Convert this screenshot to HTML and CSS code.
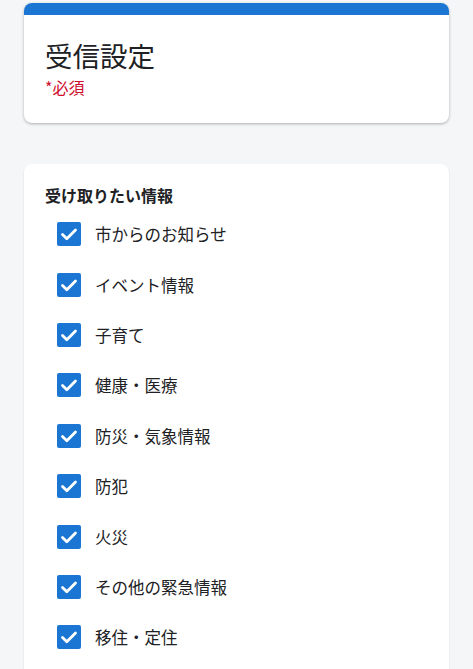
FILE: index.html
```html
<!DOCTYPE html>
<html lang="ja">
<head>
    <meta charset="UTF-8">
    <meta name="viewport" content="width=device-width, initial-scale=1.0">
    <title>受信設定</title>
    <link rel="stylesheet" href="styles.css">
</head>
<body>
    <div class="card header-card">
        <div class="card-bar"></div>
        <div class="header-body">
            <h1>受信設定</h1>
            <div class="required">*必須</div>
        </div>
    </div>

    <div class="card question-card">
        <h2>受け取りたい情報</h2>
        <ul class="options">
            <li><span class="check"><svg viewBox="0 0 24 24"><path d="M5.5 12.5l4.3 4.3 8.7-8.7"/></svg></span>市からのお知らせ</li>
            <li><span class="check"><svg viewBox="0 0 24 24"><path d="M5.5 12.5l4.3 4.3 8.7-8.7"/></svg></span>イベント情報</li>
            <li><span class="check"><svg viewBox="0 0 24 24"><path d="M5.5 12.5l4.3 4.3 8.7-8.7"/></svg></span>子育て</li>
            <li><span class="check"><svg viewBox="0 0 24 24"><path d="M5.5 12.5l4.3 4.3 8.7-8.7"/></svg></span>健康・医療</li>
            <li><span class="check"><svg viewBox="0 0 24 24"><path d="M5.5 12.5l4.3 4.3 8.7-8.7"/></svg></span>防災・気象情報</li>
            <li><span class="check"><svg viewBox="0 0 24 24"><path d="M5.5 12.5l4.3 4.3 8.7-8.7"/></svg></span>防犯</li>
            <li><span class="check"><svg viewBox="0 0 24 24"><path d="M5.5 12.5l4.3 4.3 8.7-8.7"/></svg></span>火災</li>
            <li><span class="check"><svg viewBox="0 0 24 24"><path d="M5.5 12.5l4.3 4.3 8.7-8.7"/></svg></span>その他の緊急情報</li>
            <li><span class="check"><svg viewBox="0 0 24 24"><path d="M5.5 12.5l4.3 4.3 8.7-8.7"/></svg></span>移住・定住</li>
        </ul>
    </div>
</body>
</html>
```

FILE: styles.css
```css
body {
    font-family: "Noto Sans CJK JP", "Noto Sans", sans-serif;
    margin: 0;
    padding: 3px 24px 0;
    background-color: #f5f6f8;
    color: #202124;
}
.card {
    background-color: #fff;
    border-radius: 8px;
    box-shadow: 0 1px 3px rgba(0, 0, 0, 0.3);
    overflow: hidden;
}
.card-bar {
    height: 12px;
    background-color: #1b76d3;
}
.header-body {
    padding: 22px 21px 24px;
}
.header-body h1 {
    margin: 0;
    font-size: 27.5px;
    font-weight: 400;
    line-height: 36px;
}
.required {
    margin-top: 2px;
    font-size: 16px;
    line-height: 24px;
    color: #d0102f;
}
.question-card {
    margin-top: 41px;
    padding: 19px 21px 40px 21px;
    box-shadow: 0 1px 2px rgba(0, 0, 0, 0.12);
}
.question-card h2 {
    margin: 0;
    font-size: 16px;
    font-weight: 700;
    line-height: 24px;
}
.options {
    list-style: none;
    margin: 0;
    padding: 2px 0 0 12px;
}
.options li {
    display: flex;
    align-items: center;
    height: 50.4px;
    font-size: 16.5px;
}
.check {
    width: 24px;
    height: 24px;
    border-radius: 2px;
    background-color: #1b76d3;
    margin-right: 14px;
    display: flex;
}
.check svg {
    width: 24px;
    height: 24px;
    fill: none;
    stroke: #fff;
    stroke-width: 2.8;
    stroke-linecap: round;
    stroke-linejoin: round;
}
```
